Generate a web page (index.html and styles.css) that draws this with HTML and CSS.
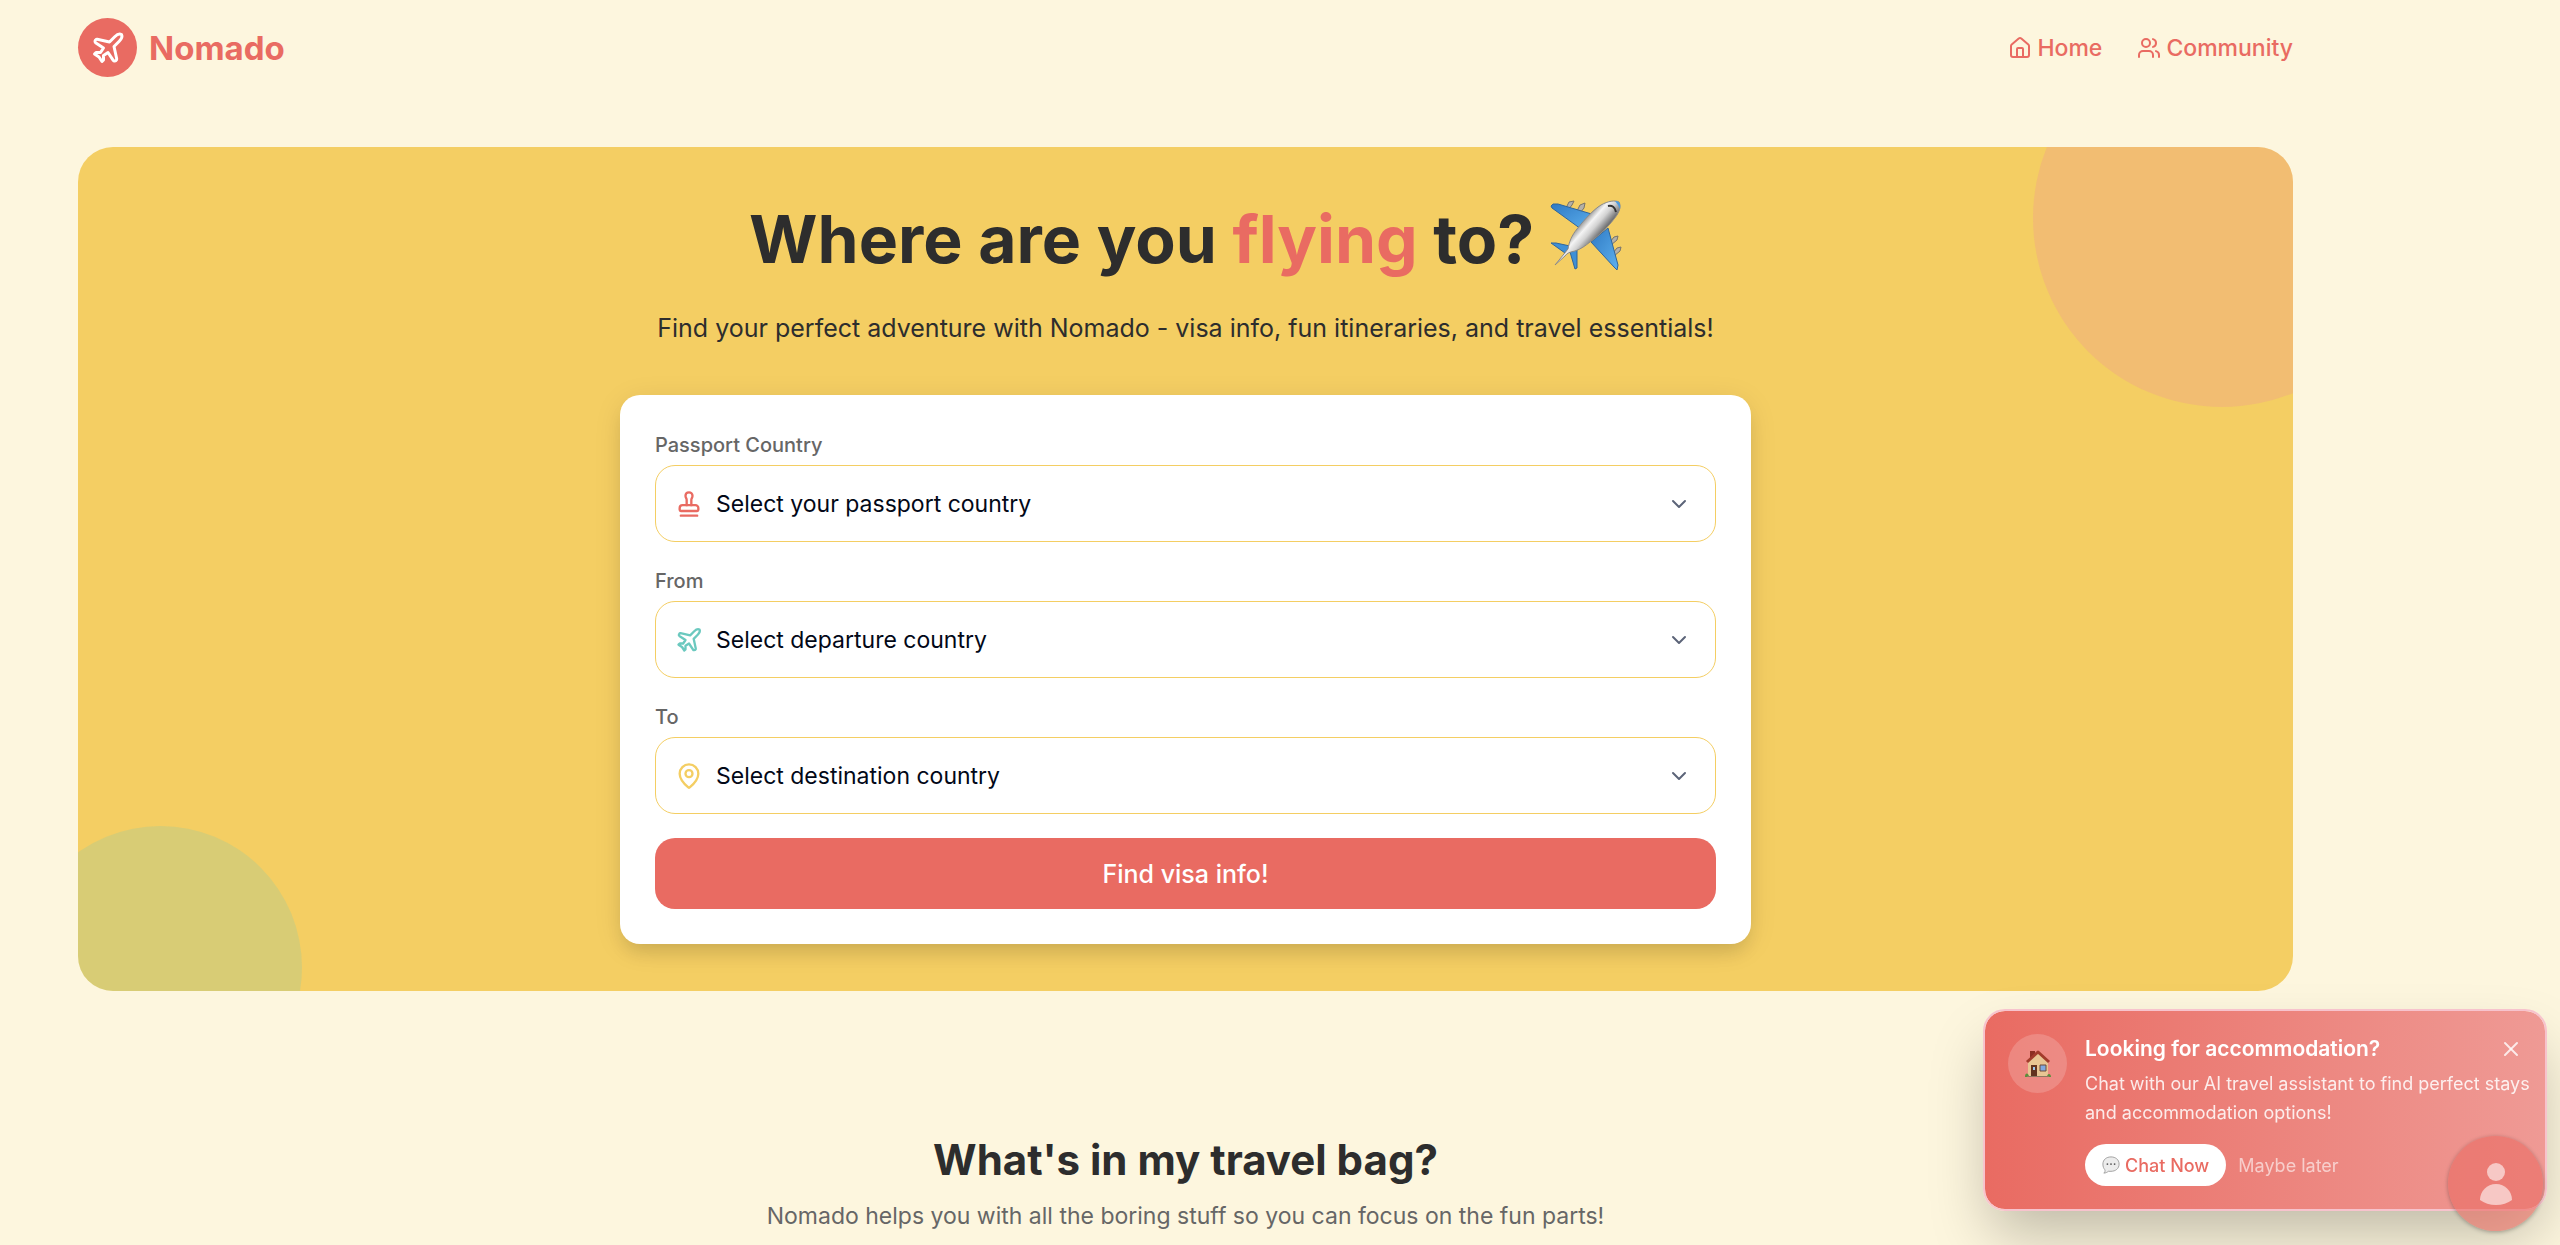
FILE: index.html
```html
<!DOCTYPE html>
<html lang="en">
<head>
  <meta charset="UTF-8" />
  <meta name="viewport" content="width=device-width, initial-scale=1.0"/>
  <title>Nomado</title>
  <link rel="stylesheet" href="styles.css">
</head>
<body>
  <div class="page">
    <header class="navbar">
      <a class="brand" href="#">
        <span class="brand-icon">
          <svg class="icon" viewBox="0 0 24 24"><path d="M17.8 19.2 16 11l3.5-3.5C21 6 21.5 4 21 3c-1-.5-3 0-4.5 1.5L13 8 4.8 6.2c-.5-.1-.9.1-1.1.5l-.3.5c-.2.5-.1 1 .3 1.3L9 12l-2 3H4l-1 1 3 2 2 3 1-1v-3l3-2 3.5 5.3c.3.4.8.5 1.3.3l.5-.2c.4-.3.6-.7.5-1.2z"/></svg>
        </span>
        Nomado
      </a>
      <nav class="nav-links">
        <a href="#">
          <svg class="icon" viewBox="0 0 24 24"><path d="M15 21v-8a1 1 0 0 0-1-1h-4a1 1 0 0 0-1 1v8"/><path d="M3 10a2 2 0 0 1 .7-1.5l7-6a2 2 0 0 1 2.6 0l7 6A2 2 0 0 1 21 10v9a2 2 0 0 1-2 2H5a2 2 0 0 1-2-2z"/></svg>
          Home
        </a>
        <a href="#">
          <svg class="icon" viewBox="0 0 24 24"><path d="M16 21v-2a4 4 0 0 0-4-4H6a4 4 0 0 0-4 4v2"/><circle cx="9" cy="7" r="4"/><path d="M22 21v-2a4 4 0 0 0-3-3.87"/><path d="M16 3.13a4 4 0 0 1 0 7.75"/></svg>
          Community
        </a>
      </nav>
    </header>

    <main>
      <section class="hero">
        <h1>
          Where are you <span class="accent">flying</span> to?
          <svg class="plane" viewBox="0 0 72 72" aria-hidden="true">
            <defs>
              <linearGradient id="body" gradientUnits="userSpaceOnUse" x1="34" y1="20" x2="50" y2="34">
                <stop offset="0" stop-color="#9a9a9a"/>
                <stop offset="0.3" stop-color="#f4f4f4"/>
                <stop offset="0.6" stop-color="#d2d2d2"/>
                <stop offset="1" stop-color="#6f7072"/>
              </linearGradient>
              <linearGradient id="wing" x1="0" y1="0" x2="1" y2="1">
                <stop offset="0" stop-color="#2f7ac4"/>
                <stop offset="1" stop-color="#5db0ee"/>
              </linearGradient>
            </defs>
            <g fill="#b5b1a8" stroke="#77736a">
              <path d="M16 8l3-6 5-1-2 4-4 5z"/>
              <path d="M27 11l3-6 5-2-1 5-4 5z"/>
              <path d="M60 42l4-5 4-1-1 4-6 5z"/>
              <path d="M63 53l4-5 4-1-1 4-6 5z"/>
            </g>
            <path fill="url(#wing)" stroke="#2f659c" d="M1 6l2-2 5 0 37 11-14 14L2 8z"/>
            <path fill="url(#wing)" stroke="#2f659c" d="M58 28l10 37-1 5-3-3-23-25z"/>
            <path fill="#3f90d6" stroke="#2f659c" d="M1 43l5 0 14 3-5 7zM20 52l7-3 0 19-2 1z"/>
            <path fill="url(#body)" stroke="#8a8a8a" d="M5 65l13-16c1-7 4-14 9-20C35 19 43 10 51 5c7-4 14-5 18-3 2 4 1 8-2 13-7 10-17 20-27 27-5 4-9 7-15 9-5 1-8 2-10 5z"/>
            <path fill="#4a9be0" d="M65 1c4 0 6 2 5 8l-2-4z"/>
            <path fill="none" stroke="#333" stroke-width="2" d="M58 6c4-1 7 1 8 6"/>
          </svg>
        </h1>
        <p class="tagline">Find your perfect adventure with Nomado - visa info, fun itineraries, and travel essentials!</p>

        <form class="search-card">
          <div class="field">
            <label for="passport">Passport Country</label>
            <div class="select-box">
              <select id="passport">
                <option>Select your passport country</option>
              </select>
              <svg class="icon lead coral" viewBox="0 0 24 24"><path d="M5 22h14"/><path d="M19.27 13.73A2.5 2.5 0 0 0 17.5 13h-11A2.5 2.5 0 0 0 4 15.5V17a1 1 0 0 0 1 1h14a1 1 0 0 0 1-1v-1.5c0-.66-.26-1.3-.73-1.77Z"/><path d="M14 13V8.5C14 7 15 7 15 5a3 3 0 0 0-3-3c-1.66 0-3 1-3 3s1 2 1 3.5V13"/></svg>
              <svg class="icon chevron" viewBox="0 0 24 24"><path d="m6 9 6 6 6-6"/></svg>
            </div>
          </div>
          <div class="field">
            <label for="from">From</label>
            <div class="select-box">
              <select id="from">
                <option>Select departure country</option>
              </select>
              <svg class="icon lead teal" viewBox="0 0 24 24"><path d="M17.8 19.2 16 11l3.5-3.5C21 6 21.5 4 21 3c-1-.5-3 0-4.5 1.5L13 8 4.8 6.2c-.5-.1-.9.1-1.1.5l-.3.5c-.2.5-.1 1 .3 1.3L9 12l-2 3H4l-1 1 3 2 2 3 1-1v-3l3-2 3.5 5.3c.3.4.8.5 1.3.3l.5-.2c.4-.3.6-.7.5-1.2z"/></svg>
              <svg class="icon chevron" viewBox="0 0 24 24"><path d="m6 9 6 6 6-6"/></svg>
            </div>
          </div>
          <div class="field">
            <label for="to">To</label>
            <div class="select-box">
              <select id="to">
                <option>Select destination country</option>
              </select>
              <svg class="icon lead yellow" viewBox="0 0 24 24"><path d="M20 10c0 5-5.54 10.19-7.4 11.8a1 1 0 0 1-1.2 0C9.54 20.19 4 15 4 10a8 8 0 0 1 16 0"/><circle cx="12" cy="10" r="3"/></svg>
              <svg class="icon chevron" viewBox="0 0 24 24"><path d="m6 9 6 6 6-6"/></svg>
            </div>
          </div>
          <button class="submit" type="button">Find visa info!</button>
        </form>
      </section>

      <section class="features">
        <h2>What's in my travel bag?</h2>
        <p>Nomado helps you with all the boring stuff so you can focus on the fun parts!</p>
      </section>
    </main>
  </div>

  <aside class="popup">
    <div class="popup-icon">
      <svg viewBox="0 0 26 28" aria-hidden="true">
        <path fill="#8c2f22" d="M5 1h5v7H5z"/>
        <path fill="#e8c593" d="M3 11L13 3l10 8v15H3z"/>
        <path fill="none" stroke="#a23b2b" stroke-width="3" stroke-linejoin="round" d="M2 12L13 2l11 10"/>
        <path fill="#63331f" d="M6 15h6v11H6z"/>
        <path fill="#7fa8e0" stroke="#6c4a3a" d="M15 15h6v6h-6z"/>
        <path fill="#9cc7ef" d="M8 17h2v3H8z"/>
        <path fill="#5c8f3a" d="M0 27c0-5 4-4 4 0zM22 27c0-4 4-4 4 0z"/>
        <path fill="#8e7760" d="M2 26h22v1H2z"/>
      </svg>
    </div>
    <div class="popup-body">
      <div class="popup-head">
        <h3>Looking for accommodation?</h3>
        <button class="close" type="button" aria-label="Close">
          <svg class="icon" viewBox="0 0 24 24"><path d="M18 6 6 18"/><path d="m6 6 12 12"/></svg>
        </button>
      </div>
      <p>Chat with our AI travel assistant to find perfect stays and accommodation options!</p>
      <div class="popup-actions">
        <button class="chat-now" type="button">
          <svg viewBox="0 0 20 20" aria-hidden="true">
            <path fill="#ececec" stroke="#9a9a9a" d="M10 1c5 0 9 3 9 8s-4 8-9 8H7c-1 1-3 2-5 2 1-1 2-2 1-4-1-1-2-3-2-6 0-5 4-8 9-8z"/>
            <g fill="#555"><circle cx="6" cy="9" r="1"/><circle cx="10" cy="9" r="1"/><circle cx="14" cy="9" r="1"/></g>
          </svg>
          Chat Now
        </button>
        <button class="later" type="button">Maybe later</button>
      </div>
    </div>
  </aside>

  <button class="chat-bubble" type="button" aria-label="Open chat">
    <svg viewBox="0 0 32 42"><ellipse cx="16" cy="9" rx="9" ry="9"/><path d="M0 37C0 28 7 21 16 21s16 7 16 16c-4 3-10 5-16 5S4 40 0 37z"/></svg>
  </button>
</body>
</html>
```
FILE: styles.css
```css
* {
  box-sizing: border-box;
}

body {
  margin: 0;
  min-height: 100vh;
  background: #fdf6de;
  font-family: Inter, "Liberation Sans", sans-serif;
  color: #2d2d2d;
}

h1, h2, h3, p {
  margin: 0;
}

a {
  color: inherit;
  text-decoration: none;
}

button, select {
  font-family: inherit;
  border: none;
  cursor: pointer;
}

.icon {
  display: block;
  fill: none;
  stroke: currentColor;
  stroke-width: 2;
  stroke-linecap: round;
  stroke-linejoin: round;
}

.page {
  max-width: 2371px;
  padding: 0 78px;
}

/* navbar */
.navbar {
  display: flex;
  justify-content: space-between;
  align-items: center;
  padding: 18px 0;
  color: #e96b62;
}

.brand {
  display: flex;
  align-items: center;
  gap: 12px;
  font-size: 33px;
  font-weight: 700;
}

.brand-icon {
  display: flex;
  align-items: center;
  justify-content: center;
  width: 59px;
  height: 59px;
  border-radius: 50%;
  background: #e96b62;
  color: #fff;
}

.brand-icon .icon {
  width: 36px;
  height: 36px;
}

.nav-links {
  display: flex;
  gap: 35px;
  font-size: 23px;
  font-weight: 500;
}

.nav-links a {
  display: flex;
  align-items: center;
  gap: 5px;
}

.nav-links .icon {
  width: 24px;
  height: 24px;
}

/* hero */
.hero {
  position: relative;
  overflow: hidden;
  display: flex;
  flex-direction: column;
  align-items: center;
  margin-top: 52px;
  padding: 47px;
  border-radius: 35px;
  background: #f4ce63;
  text-align: center;
}

.hero::before,
.hero::after {
  content: "";
  position: absolute;
  border-radius: 50%;
}

.hero::before {
  top: -118px;
  right: -118px;
  width: 378px;
  height: 378px;
  background: rgba(238, 150, 148, 0.3);
}

.hero::after {
  bottom: -118px;
  left: -59px;
  width: 283px;
  height: 283px;
  background: rgba(107, 201, 191, 0.2);
}

.hero h1 {
  font-size: 66px;
  line-height: 90px;
  font-weight: 700;
}

.accent {
  color: #e96b62;
}

.plane {
  width: 72px;
  height: 72px;
  vertical-align: -9px;
}

.tagline {
  margin-top: 24px;
  font-size: 25px;
  line-height: 40px;
}

.search-card {
  position: relative;
  z-index: 1;
  display: flex;
  flex-direction: column;
  gap: 24px;
  width: 100%;
  max-width: 1131px;
  margin-top: 47px;
  padding: 35px;
  border-radius: 20px;
  background: #fff;
  box-shadow: 0 12px 18px -4px rgba(0, 0, 0, 0.1), 0 5px 30px -2px rgba(0, 0, 0, 0.1);
  text-align: left;
}

.field label {
  display: block;
  margin-bottom: 5px;
  font-size: 20px;
  line-height: 30px;
  font-weight: 500;
  color: #666;
}

.select-box {
  position: relative;
}

.select-box select {
  appearance: none;
  display: block;
  width: 100%;
  height: 77px;
  padding: 0 60px;
  border: 1px solid #f4ce63;
  border-radius: 20px;
  background: #fff;
  font-size: 23px;
  color: #020817;
}

.lead,
.chevron {
  position: absolute;
  top: 50%;
  transform: translateY(-50%);
  pointer-events: none;
}

.lead {
  left: 20px;
  width: 28px;
  height: 28px;
}

.chevron {
  right: 25px;
  width: 24px;
  height: 24px;
  color: #5c6478;
}

.coral { color: #e96b62; }
.teal { color: #6bc9bf; }
.yellow { color: #f4ce63; }

.submit {
  height: 71px;
  border-radius: 20px;
  background: #e96b62;
  color: #fff;
  font-size: 25px;
  font-weight: 500;
}

/* features */
.features {
  padding: 142px 0 0;
  text-align: center;
}

.features h2 {
  font-size: 42px;
  line-height: 54px;
  font-weight: 700;
}

.features p {
  margin-top: 12px;
  font-size: 23px;
  line-height: 34px;
  color: #666;
}

/* accommodation popup */
.popup {
  position: fixed;
  right: 13px;
  bottom: 34px;
  display: flex;
  gap: 18px;
  width: 564px;
  padding: 23px 14px 23px 23px;
  border: 2px solid #f7c3cd;
  border-radius: 22px;
  background: linear-gradient(90deg, #e96b62, #ef9a95);
  background-clip: padding-box;
  box-shadow: 0 30px 60px -8px rgba(0, 0, 0, 0.25);
  color: #fff;
}

.popup-icon {
  display: flex;
  align-items: center;
  justify-content: center;
  flex: none;
  width: 59px;
  height: 59px;
  border-radius: 50%;
  background: rgba(255, 255, 255, 0.18);
}

.popup-icon svg {
  width: 26px;
  height: 28px;
}

.popup-body {
  flex: 1;
}

.popup-head {
  display: flex;
  justify-content: space-between;
  align-items: center;
  padding-right: 8px;
}

.popup h3 {
  font-size: 21px;
  line-height: 30px;
  font-weight: 600;
}

.close {
  padding: 0;
  background: none;
  color: rgba(255, 255, 255, 0.8);
}

.close .icon {
  width: 24px;
  height: 24px;
}

.popup p {
  margin-top: 5px;
  font-size: 18px;
  line-height: 29px;
  color: rgba(255, 255, 255, 0.85);
}

.popup-actions {
  display: flex;
  align-items: center;
  gap: 12px;
  margin-top: 17px;
}

.chat-now {
  display: flex;
  align-items: center;
  gap: 5px;
  height: 42px;
  padding: 0 17px;
  border-radius: 21px;
  background: #fff;
  color: #e96b62;
  font-size: 18px;
  font-weight: 500;
}

.chat-now svg {
  width: 18px;
  height: 18px;
}

.later {
  padding: 0;
  background: none;
  color: rgba(255, 255, 255, 0.6);
  font-size: 18px;
}

/* floating chat button */
.chat-bubble {
  position: fixed;
  right: 17px;
  bottom: 14px;
  display: flex;
  align-items: center;
  justify-content: center;
  width: 95px;
  height: 95px;
  padding: 0;
  border-radius: 50%;
  background: rgba(233, 107, 98, 0.6);
  box-shadow: 0 1px 4px rgba(0, 0, 0, 0.3);
}

.chat-bubble svg {
  width: 32px;
  height: 42px;
  fill: #f7c8c5;
}
```
